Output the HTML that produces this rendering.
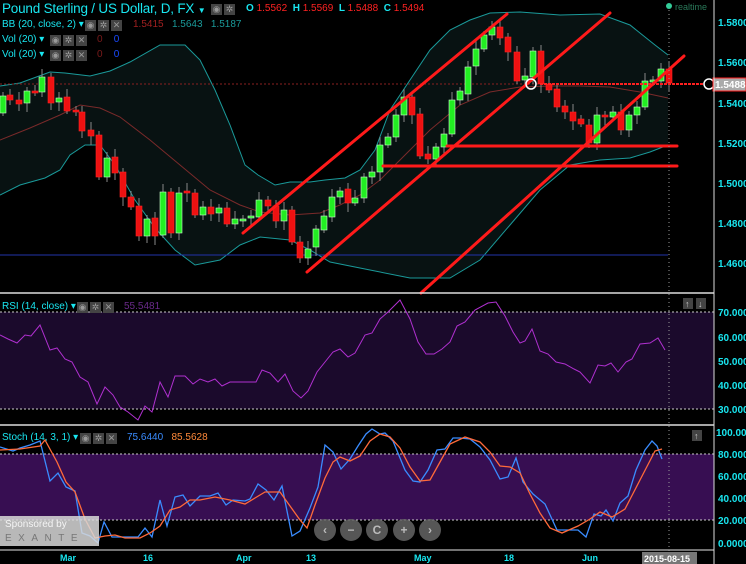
<!DOCTYPE html>
<html><head><meta charset="utf-8">
<style>
html,body{margin:0;padding:0;background:#000;width:746px;height:564px;overflow:hidden;font-family:"Liberation Sans",sans-serif}
#c{position:absolute;left:0;top:0}
.t{position:absolute;white-space:nowrap;color:#19e6f0}
.b{position:absolute;display:flex;gap:2px}
.btn{display:block;width:11px;height:11px;background:#444;color:#999;font-size:9px;line-height:11px;text-align:center}
</style></head><body>
<svg id="c" width="746" height="564" viewBox="0 0 746 564" xmlns="http://www.w3.org/2000/svg">
<rect width="746" height="564" fill="#000"/>
<path id="bbfill" fill="#081212" d=""/>
<polyline id="ub" fill="none" stroke="#1a9a9a" stroke-width="1"/>
<polyline id="lb" fill="none" stroke="#1a9a9a" stroke-width="1"/>
<polyline id="mb" fill="none" stroke="#7a2a2a" stroke-width="1"/>
<line x1="0" y1="255" x2="668" y2="255" stroke="#2233aa" stroke-width="1"/>
<line x1="0" y1="84" x2="540" y2="84" stroke="#8a2020" stroke-width="1" stroke-dasharray="2,2"/>
<g id="candles"></g>
<g stroke="#ff1a1a" stroke-width="3" stroke-linecap="round">
<line x1="243" y1="233" x2="507" y2="14"/>
<line x1="307" y1="272" x2="610" y2="13"/>
<line x1="421" y1="293" x2="684" y2="56"/>
<line x1="447" y1="146" x2="677" y2="146"/>
<line x1="383" y1="166" x2="677" y2="166"/>
</g>
<line x1="540" y1="84" x2="746" y2="84" stroke="#ff2020" stroke-width="2" stroke-dasharray="3,1"/>
<circle cx="531" cy="84" r="5" fill="none" stroke="#fff" stroke-width="1.5"/>
<circle cx="709" cy="84" r="5" fill="#000" stroke="#fff" stroke-width="1.5"/>
<rect x="713" y="78" width="33" height="13" fill="#aaa" stroke="#ff2020"/>
<text x="715" y="88" font-size="10" font-weight="bold" fill="#fff" font-family="Liberation Sans">1.5488</text>
<rect x="0" y="312" width="714" height="97" fill="#1b0a2c"/>
<line x1="0" y1="312" x2="714" y2="312" stroke="#ccc" stroke-dasharray="2,2"/>
<line x1="0" y1="409" x2="714" y2="409" stroke="#ccc" stroke-dasharray="2,2"/>
<rect x="0" y="454" width="714" height="66" fill="#370e52"/>
<line x1="0" y1="454" x2="714" y2="454" stroke="#ccc" stroke-dasharray="2,2"/>
<line x1="0" y1="520" x2="714" y2="520" stroke="#ccc" stroke-dasharray="2,2"/>
<polyline id="rsi" fill="none" stroke="#b030d0" stroke-width="1"/>
<polyline id="sk" fill="none" stroke="#3a8cff" stroke-width="1.3"/>
<polyline id="sd" fill="none" stroke="#ff6a3a" stroke-width="1.3"/>
<line x1="0" y1="293" x2="714" y2="293" stroke="#ddd" stroke-width="1.5"/>
<line x1="0" y1="425" x2="714" y2="425" stroke="#ddd" stroke-width="1.5"/>
<line x1="0" y1="550" x2="714" y2="550" stroke="#999" stroke-width="1.5"/>
<line x1="714" y1="0" x2="714" y2="564" stroke="#ddd" stroke-width="1"/>
<line x1="669" y1="10" x2="669" y2="564" stroke="#999" stroke-dasharray="1,3"/>
<circle cx="669" cy="6" r="3" fill="#3c9" />
<text x="675" y="10" font-size="9" fill="#2a7a5a" font-family="Liberation Sans">realtime</text>
<g font-size="10" font-weight="bold" fill="#19e6f0" font-family="Liberation Sans">
<text x="718" y="26">1.5800</text><text x="718" y="66">1.5600</text><text x="718" y="107">1.5400</text>
<text x="718" y="147">1.5200</text><text x="718" y="187">1.5000</text><text x="718" y="227">1.4800</text><text x="718" y="267">1.4600</text>
<text x="718" y="316">70.0000</text><text x="718" y="341">60.0000</text><text x="718" y="365">50.0000</text><text x="718" y="389">40.0000</text><text x="718" y="413">30.0000</text>
<text x="716" y="436">100.0000</text><text x="718" y="458">80.0000</text><text x="718" y="480">60.0000</text><text x="718" y="502">40.0000</text><text x="718" y="524">20.0000</text><text x="718" y="547">0.0000</text>
</g>
<g font-size="9" font-weight="bold" fill="#19e6f0" font-family="Liberation Sans">
<text x="60" y="561">Mar</text><text x="143" y="561">16</text><text x="236" y="561">Apr</text><text x="306" y="561">13</text>
<text x="414" y="561">May</text><text x="504" y="561">18</text><text x="582" y="561">Jun</text>
</g>
<rect x="642" y="552" width="55" height="12" fill="#777"/>
<text x="644" y="562" font-size="9" font-weight="bold" fill="#fff" font-family="Liberation Sans">2015-08-15</text>
<rect x="683" y="298" width="10" height="11" fill="#444"/><rect x="696" y="298" width="10" height="11" fill="#444"/>
<text x="685" y="307" font-size="9" fill="#ccc">↑</text><text x="698" y="307" font-size="9" fill="#ccc">↓</text>
<rect x="692" y="430" width="10" height="11" fill="#444"/><text x="694" y="439" font-size="9" fill="#ccc">↑</text>
<rect x="0" y="516" width="99" height="30" fill="#d8d8d8" opacity="0.85"/>
<text x="5" y="527" font-size="10" fill="#f4f4f4" font-family="Liberation Sans">Sponsored by</text>
<text x="5" y="541" font-size="10" fill="#777" letter-spacing="6.5" font-family="Liberation Sans">EXANTE</text>
<g fill="#666" opacity="0.85">
<circle cx="325" cy="530" r="11"/><circle cx="351" cy="530" r="11"/><circle cx="377" cy="530" r="11"/><circle cx="404" cy="530" r="11"/><circle cx="430" cy="530" r="11"/>
</g>
<g fill="#bbb" font-size="12" font-family="Liberation Sans" text-anchor="middle" font-weight="bold">
<text x="325" y="534">‹</text><text x="351" y="534">−</text><text x="377" y="534">C</text><text x="404" y="534">+</text><text x="430" y="534">›</text>
</g>
</svg>
<div class="t" style="left:2px;top:1px;font-size:13.5px;letter-spacing:-0.2px">Pound Sterling / US Dollar, D, FX <span style="font-size:8px">▼</span></div>
<div class="b" style="left:211px;top:4px;"><span class="btn">◉</span><span class="btn">✲</span></div>
<div class="t" style="left:246px;top:3px;font-size:10px;font-weight:bold">O <span style="color:#f22;font-weight:normal">1.5562</span>&nbsp; H <span style="color:#f22;font-weight:normal">1.5569</span>&nbsp; L <span style="color:#f22;font-weight:normal">1.5488</span>&nbsp; C <span style="color:#f22;font-weight:normal">1.5494</span></div>
<div class="t" style="left:2px;top:19px;font-size:10px;">BB (20, close, 2) ▾</div>
<div class="b" style="left:85px;top:20px;"><span class="btn">◉</span><span class="btn">✲</span><span class="btn">✕</span></div>
<div class="t" style="left:133px;top:19px;font-size:10px;"><span style="color:#a02020">1.5415</span>&nbsp;&nbsp; <span style="color:#1a9a9a">1.5643</span>&nbsp;&nbsp; <span style="color:#1a9a9a">1.5187</span></div>
<div class="t" style="left:2px;top:34px;font-size:10px;">Vol (20) ▾</div>
<div class="b" style="left:50px;top:35px;"><span class="btn">◉</span><span class="btn">✲</span><span class="btn">✕</span></div>
<div class="t" style="left:97px;top:34px;font-size:10px;"><span style="color:#7a1a1a">0</span>&nbsp;&nbsp;&nbsp; <span style="color:#1a4aff">0</span></div>
<div class="t" style="left:2px;top:49px;font-size:10px;">Vol (20) ▾</div>
<div class="b" style="left:50px;top:50px;"><span class="btn">◉</span><span class="btn">✲</span><span class="btn">✕</span></div>
<div class="t" style="left:97px;top:49px;font-size:10px;"><span style="color:#7a1a1a">0</span>&nbsp;&nbsp;&nbsp; <span style="color:#1a4aff">0</span></div>
<div class="t" style="left:2px;top:301px;font-size:10px;">RSI (14, close) ▾</div>
<div class="b" style="left:77px;top:302px;"><span class="btn">◉</span><span class="btn">✲</span><span class="btn">✕</span></div>
<div class="t" style="left:124px;top:301px;font-size:10px;color:#6a2a8a">55.5481</div>
<div class="t" style="left:2px;top:432px;font-size:10px;">Stoch (14, 3, 1) ▾</div>
<div class="b" style="left:80px;top:433px;"><span class="btn">◉</span><span class="btn">✲</span><span class="btn">✕</span></div>
<div class="t" style="left:127px;top:432px;font-size:10px;"><span style="color:#3a8cff">75.6440</span>&nbsp;&nbsp; <span style="color:#ff8a3a">85.5628</span></div>
<script>
function P(a){return a.map(p=>p.join(',')).join(' ');}
var ub=[[0,86],[20,83],[50,72],[65,73],[90,76],[110,71],[130,62],[160,45],[185,45],[200,60],[215,90],[230,125],[245,165],[258,175],[275,185],[290,182],[310,182],[325,180],[345,178],[360,170],[375,150],[390,110],[410,80],[430,50],[450,30],[470,20],[490,13],[520,12],[560,15],[600,14],[630,25],[655,45],[668,55]];
var lb=[[0,195],[20,185],[45,178],[60,170],[70,155],[85,145],[100,145],[115,165],[135,200],[155,228],[175,250],[195,265],[220,260],[240,245],[260,237],[290,240],[310,250],[330,262],[370,270],[410,278],[450,278],[480,260],[510,225],[540,190],[570,165],[600,160],[630,158],[650,152],[668,145]];
var mb=[[0,140],[30,128],[60,115],[80,105],[100,108],[120,117],[150,140],[180,165],[210,190],[240,205],[260,212],[290,215],[320,213],[340,205],[360,195],[380,180],[400,160],[430,130],[460,105],[490,92],[520,87],[550,86],[580,86],[610,87],[640,92],[668,98]];
document.getElementById('ub').setAttribute('points',P(ub));
document.getElementById('lb').setAttribute('points',P(lb));
document.getElementById('mb').setAttribute('points',P(mb));
document.getElementById('bbfill').setAttribute('d','M'+P(ub)+' L'+P(lb.slice().reverse())+'Z');
var C=[[3,96,113,'g'],[10,95,100,'r'],[19,100,104,'r'],[27,91,103,'g'],[35,91,93,'r'],[42,77,92,'g'],[51,77,103,'r'],[59,98,102,'g'],[67,97,111,'r'],[76,110,111,'r'],[82,112,131,'r'],[91,130,136,'r'],[99,135,177,'r'],[107,158,177,'g'],[115,157,173,'r'],[123,172,197,'r'],[131,197,207,'r'],[139,206,236,'r'],[147,219,236,'g'],[155,218,236,'r'],[163,192,235,'g'],[171,192,233,'r'],[179,193,233,'g'],[187,191,193,'r'],[195,193,215,'r'],[203,207,215,'g'],[211,207,214,'r'],[219,208,213,'g'],[227,208,224,'r'],[235,219,224,'g'],[243,219,220,'g'],[251,216,217,'g'],[259,200,217,'g'],[268,200,206,'r'],[276,206,221,'r'],[284,210,221,'g'],[292,210,242,'r'],[300,242,258,'r'],[308,249,258,'g'],[316,229,247,'g'],[324,216,230,'g'],[332,197,217,'g'],[340,191,197,'g'],[348,189,203,'r'],[355,198,203,'g'],[364,177,198,'g'],[372,172,177,'g'],[380,145,172,'g'],[388,137,145,'g'],[396,115,137,'g'],[404,97,115,'g'],[412,97,115,'r'],[420,114,156,'r'],[428,154,159,'r'],[436,147,159,'g'],[444,134,147,'g'],[452,100,134,'g'],[460,91,100,'g'],[468,67,94,'g'],[476,49,66,'g'],[484,35,49,'g'],[492,27,35,'g'],[500,27,38,'r'],[508,37,52,'r'],[517,52,81,'r'],[525,76,80,'g'],[533,51,77,'g'],[541,51,84,'r'],[549,84,90,'r'],[557,89,107,'r'],[565,106,112,'r'],[573,112,121,'r'],[581,119,124,'r'],[589,125,143,'r'],[597,115,143,'g'],[605,115,117,'r'],[613,112,117,'g'],[621,112,130,'r'],[629,115,130,'g'],[637,107,115,'g'],[645,81,107,'g'],[653,80,81,'g'],[661,69,81,'g'],[669,69,83,'r']];
var s='';C.forEach(function(c,i){var h=c[2]-c[1];if(h<2)h=2;var wt=c[1]-4-(i%3)*2,wb=c[2]+3+(i%4)*2;
s+='<line x1="'+c[0]+'" y1="'+wt+'" x2="'+c[0]+'" y2="'+wb+'" stroke="#888" stroke-width="1"/>';
s+='<rect x="'+(c[0]-3)+'" y="'+c[1]+'" width="6" height="'+h+'" fill="'+(c[3]=='g'?'#22ee22':'#ee1111')+'" stroke="'+(c[3]=='g'?'#ccffcc':'#ff2222')+'" stroke-width="0.6"/>';});
document.getElementById('candles').innerHTML=s;
var rsi=[[0,133],[8,137],[17,141],[25,133],[31,134],[40,123],[50,148],[57,146],[65,157],[72,160],[80,175],[88,180],[97,202],[105,185],[113,193],[120,205],[128,210],[138,218],[145,204],[152,210],[160,180],[168,195],[175,174],[185,174],[193,182],[200,177],[208,180],[215,177],[222,184],[230,180],[245,180],[256,180],[262,168],[270,171],[278,180],[285,172],[293,189],[301,196],[308,189],[317,170],[325,160],[333,150],[340,147],[348,155],[355,151],[365,133],[372,131],[380,117],[388,110],[400,98],[410,117],[418,140],[426,152],[434,152],[442,147],[450,140],[457,124],[465,120],[475,108],[488,101],[496,100],[505,114],[513,130],[520,141],[525,139],[532,127],[540,149],[548,152],[556,160],[565,162],[574,167],[580,170],[590,181],[598,163],[605,164],[611,161],[618,170],[626,160],[632,157],[640,142],[650,141],[658,136],[665,148]];
document.getElementById('rsi').setAttribute('points',P(rsi.map(p=>[p[0],p[1]+202])));
var sk=[[0,447],[13,451],[20,448],[30,445],[40,441],[50,481],[58,473],[66,487],[75,491],[82,533],[90,536],[98,543],[104,522],[112,537],[125,537],[138,537],[145,528],[152,537],[160,500],[167,526],[175,497],[183,495],[190,506],[200,496],[210,496],[218,493],[226,505],[233,500],[245,501],[250,499],[258,484],[266,490],[274,500],[282,486],[292,536],[300,531],[310,508],[318,487],[325,445],[333,452],[341,469],[350,459],[358,446],[366,434],[372,429],[380,434],[385,433],[393,441],[405,470],[413,481],[420,482],[428,470],[437,450],[445,449],[453,438],[460,438],[470,439],[480,447],[490,460],[500,479],[508,477],[516,458],[523,482],[533,494],[545,504],[557,530],[567,530],[578,530],[586,537],[594,514],[601,516],[606,510],[613,521],[620,503],[628,496],[636,470],[645,450],[652,441],[657,446],[662,459]];
var sd=[[0,450],[20,449],[40,446],[45,440],[57,462],[66,482],[75,492],[85,519],[95,538],[105,536],[115,535],[125,538],[140,538],[150,533],[160,526],[170,510],[180,507],[190,500],[200,500],[215,497],[230,500],[245,504],[255,498],[265,492],[280,492],[290,506],[300,520],[307,528],[315,505],[325,478],[333,462],[340,457],[350,461],[360,456],[370,441],[380,434],[390,437],[400,448],[410,467],[420,481],[430,480],[440,462],[450,444],[465,437],[480,442],[490,452],[500,466],[510,467],[520,473],[530,494],[540,513],[550,528],[562,533],[578,526],[590,519],[600,512],[612,517],[625,509],[640,480],[655,451],[662,449]];
document.getElementById('sk').setAttribute('points',P(sk));
document.getElementById('sd').setAttribute('points',P(sd));
</script>
</body></html>
